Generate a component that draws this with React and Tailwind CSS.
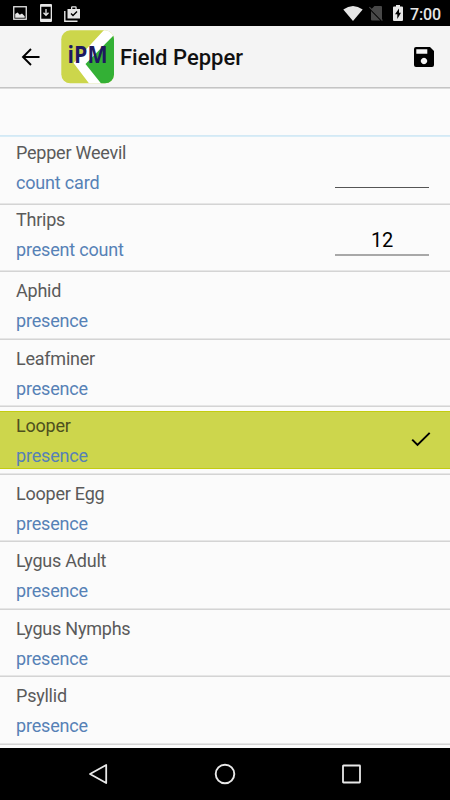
import React from "react";

const rows = [
  { name: "Pepper Weevil", kind: "count card", input: "", size: "h-[68px] pt-px" },
  { name: "Thrips", kind: "present count", input: "12", size: "h-[67px]" },
  { name: "Aphid", kind: "presence", size: "h-[68px] pt-1" },
  { name: "Leafminer", kind: "presence", size: "h-[67px] pt-1" },
  { name: "Looper", kind: "presence", selected: true, size: "h-[68px] pt-1" },
  { name: "Looper Egg", kind: "presence", size: "h-[67px] pt-1" },
  { name: "Lygus Adult", kind: "presence", size: "h-[68px] pt-1" },
  { name: "Lygus Nymphs", kind: "presence", size: "h-[67px] pt-1" },
  { name: "Psyllid", kind: "presence", size: "h-[68px] pt-1" },
];

function StatusBar() {
  return (
    <div className="flex h-[26px] shrink-0 items-center bg-black text-[#e6e6e6]">
      <svg className="ml-[13px] h-[14px] w-[14px]" viewBox="0 0 14 14">
        <rect x=".75" y=".75" width="12.5" height="12.5" fill="none" stroke="currentColor" strokeWidth="1.3" />
        <path d="M2.200 11.800V8L4.500 6.500l2.300 2.300L9 7.500l2.700 2.700v1.600H2.200z" fill="currentColor" />
      </svg>
      <svg className="ml-[13px] h-[18px] w-[12px]" viewBox="0 0 12 18">
        <path fillRule="evenodd" d="M1 0h10a1 1 0 0 1 1 1v16a1 1 0 0 1-1 1H1a1 1 0 0 1-1-1V1a1 1 0 0 1 1-1zM1.300 2.800v12h9.400v-12z" fill="currentColor" />
        <path d="M6 5v6M3.500 8.800 6 11.300l2.500-2.500" fill="none" stroke="currentColor" strokeWidth="1.300" />
      </svg>
      <svg className="mt-[1px] ml-[12px] h-[16px] w-[17px]" viewBox="0 0 17 16">
        <path fillRule="evenodd" d="M7 3V1.500Q7 .3 8.200.3h3.300Q12.700.3 12.700 1.500V3H16v9.500H3.500V3zM8.300 3h3.100V1.600H8.300z" fill="currentColor" />
        <path d="M.8 5v10.200H13.500" fill="none" stroke="currentColor" strokeWidth="1.400" />
        <path d="m7 7.500 2 2 4-4" fill="none" stroke="#000" strokeWidth="1.400" />
      </svg>
      <div className="grow" />
      <svg className="h-[15px] w-[20px]" viewBox="0 0 20 15">
        <path d="M.3 3.600Q10-3.600 19.700 3.600L10 15z" fill="currentColor" />
      </svg>
      <svg className="ml-[6px] h-[15px] w-[14px]" viewBox="0 0 14 15">
        <path d="M5.500 0H12q1 0 1 1v13L2 3.500zM2 5l9.300 9.500H3q-1 0-1-1z" fill="#484848" />
        <path d="m.4 1.200 13 13.300" stroke="#484848" strokeWidth="1.100" />
      </svg>
      <svg className="ml-[10px] h-[16px] w-[10px]" viewBox="0 0 10 16">
        <path d="M3 0h4v1.500h2q1 0 1 1V15q0 1-1 1H1q-1 0-1-1V2.500q0-1 1-1h2z" fill="currentColor" />
        <path d="M6 3.500 2 9.300h2.300V14L8 7.800H6z" fill="#000" />
      </svg>
      <span className="mt-[3px] mr-[9px] ml-[7px] w-[31px] text-[16px] leading-[26px] font-medium tracking-[-0.1px] whitespace-nowrap">7:00</span>
    </div>
  );
}

function Logo() {
  return (
    <svg className="ml-[20px] h-[54px] w-[54px]" viewBox="0 0 54 54">
      <defs>
        <clipPath id="logo-shape">
          <rect x=".3" y=".3" width="52.700" height="53" rx="9" />
        </clipPath>
      </defs>
      <g clipPath="url(#logo-shape)">
        <path d="M0 0h54v54H0z" fill="#ccd64b" />
        <path d="M43 0h11v5L26.500 33.700 42 54H28.500L12.500 33z" fill="#fff" />
        <path d="M54 4v50H40.500L24.500 34z" fill="#33b035" />
      </g>
      <text x="6.500" y="33" fontSize="22.500" fontWeight="700" textLength="40" lengthAdjust="spacingAndGlyphs" fill="#1e1860" fontFamily="'Open Sans', sans-serif">iPM</text>
    </svg>
  );
}

function AppBar() {
  return (
    <header className="flex h-[63px] shrink-0 flex-col">
      <div className="flex h-[61px] items-center bg-[#f4f4f4]">
        <svg className="ml-[21px] h-[20px] w-[20px]" viewBox="0 0 20 20">
          <path d="M18.500 10H2.300M10 2 2 10l8 8" fill="none" stroke="#000" strokeWidth="1.900" />
        </svg>
        <Logo />
        <h1 className="mt-[3px] ml-[5px] text-[22px] leading-[30px] font-medium whitespace-nowrap text-[#111]">Field Pepper</h1>
        <svg className="mr-[16.500px] ml-auto h-[20px] w-[20px]" viewBox="0 0 20 20">
          <path fillRule="evenodd" d="M2 0h14l4 4v14q0 2-2 2H2q-2 0-2-2V2q0-2 2-2zM2.300 2.300v4.400h11V2.300zM10 10.800a3.200 3.200 0 1 0 .01 0z" fill="#000" />
        </svg>
      </div>
      <div className="h-px bg-[#c4c4c4]" />
      <div className="h-px bg-[#dcdcdc]" />
    </header>
  );
}

function Row({ row }) {
  return (
    <li className={"flex shrink-0 flex-col " + row.size}>
      <div className={"flex h-[58px] shrink-0 px-4 " + (row.selected ? "border-y border-[#c3cc10] bg-[#cdd64c]" : "")}>
        <div className={"flex flex-col text-[18px] " + (row.selected ? "-mt-px" : "")}>
          <span className={"h-[30px] leading-[30px] tracking-[-0.23px] whitespace-nowrap " + (row.selected ? "text-[#4d501e]" : "text-[#5a5a5a]")}>{row.name}</span>
          <span className="h-[30px] leading-[30px] tracking-[-0.18px] whitespace-nowrap text-[#5681b6]">{row.kind}</span>
        </div>
        {row.input !== undefined && (
          <div className={"mr-[5px] ml-auto w-[94px] pt-[20px] text-center text-[20px] leading-[30px] tracking-[-0.3px] text-black " + (row.input ? "h-[51px] border-b-2 border-[#a8a8a8]" : "h-[50px] border-b border-[#555]")}>
            {row.input}
          </div>
        )}
        {row.selected && (
          <svg className="mt-[20px] mr-[3px] ml-auto h-[15px] w-[20px]" viewBox="0 0 20 15">
            <path d="m1.200 7.600 5.300 5.300L18.700.900" fill="none" stroke="#000" strokeWidth="2" />
          </svg>
        )}
      </div>
      <div className="mt-auto h-px shrink-0 bg-[#e6e6e6]" />
      <div className="h-px shrink-0 bg-[#d4d4d4]" />
    </li>
  );
}

function NavBar() {
  return (
    <nav className="flex h-[52px] shrink-0 items-center bg-black text-[#e8e8e8]">
      <svg className="ml-[88px] h-[22px] w-[20px]" viewBox="0 0 20 22">
        <path d="M18.200 2v18L2 11z" fill="none" stroke="currentColor" strokeWidth="1.800" strokeLinejoin="round" />
      </svg>
      <svg className="ml-[106px] h-[22px] w-[22px]" viewBox="0 0 22 22">
        <circle cx="11" cy="11" r="9.300" fill="none" stroke="currentColor" strokeWidth="1.900" />
      </svg>
      <svg className="ml-[105px] h-[20px] w-[20px]" viewBox="0 0 20 20">
        <rect x="2" y="1.500" width="17" height="17" rx=".5" fill="none" stroke="currentColor" strokeWidth="1.800" />
      </svg>
    </nav>
  );
}

export default function App() {
  return (
    <div className="flex h-[800px] w-[450px] flex-col overflow-hidden bg-[#fbfbfb] font-['Roboto',sans-serif]">
      <StatusBar />
      <AppBar />
      <main className="flex grow flex-col">
        <div className="flex h-[48px] shrink-0 flex-col justify-end">
          <div className="h-px bg-[#d3e9f5]" />
          <div className="h-px bg-[#d9edf7]" />
        </div>
        <ul className="flex flex-col">
          {rows.map((row) => (
            <Row key={row.name} row={row} />
          ))}
        </ul>
      </main>
      <NavBar />
    </div>
  );
}
